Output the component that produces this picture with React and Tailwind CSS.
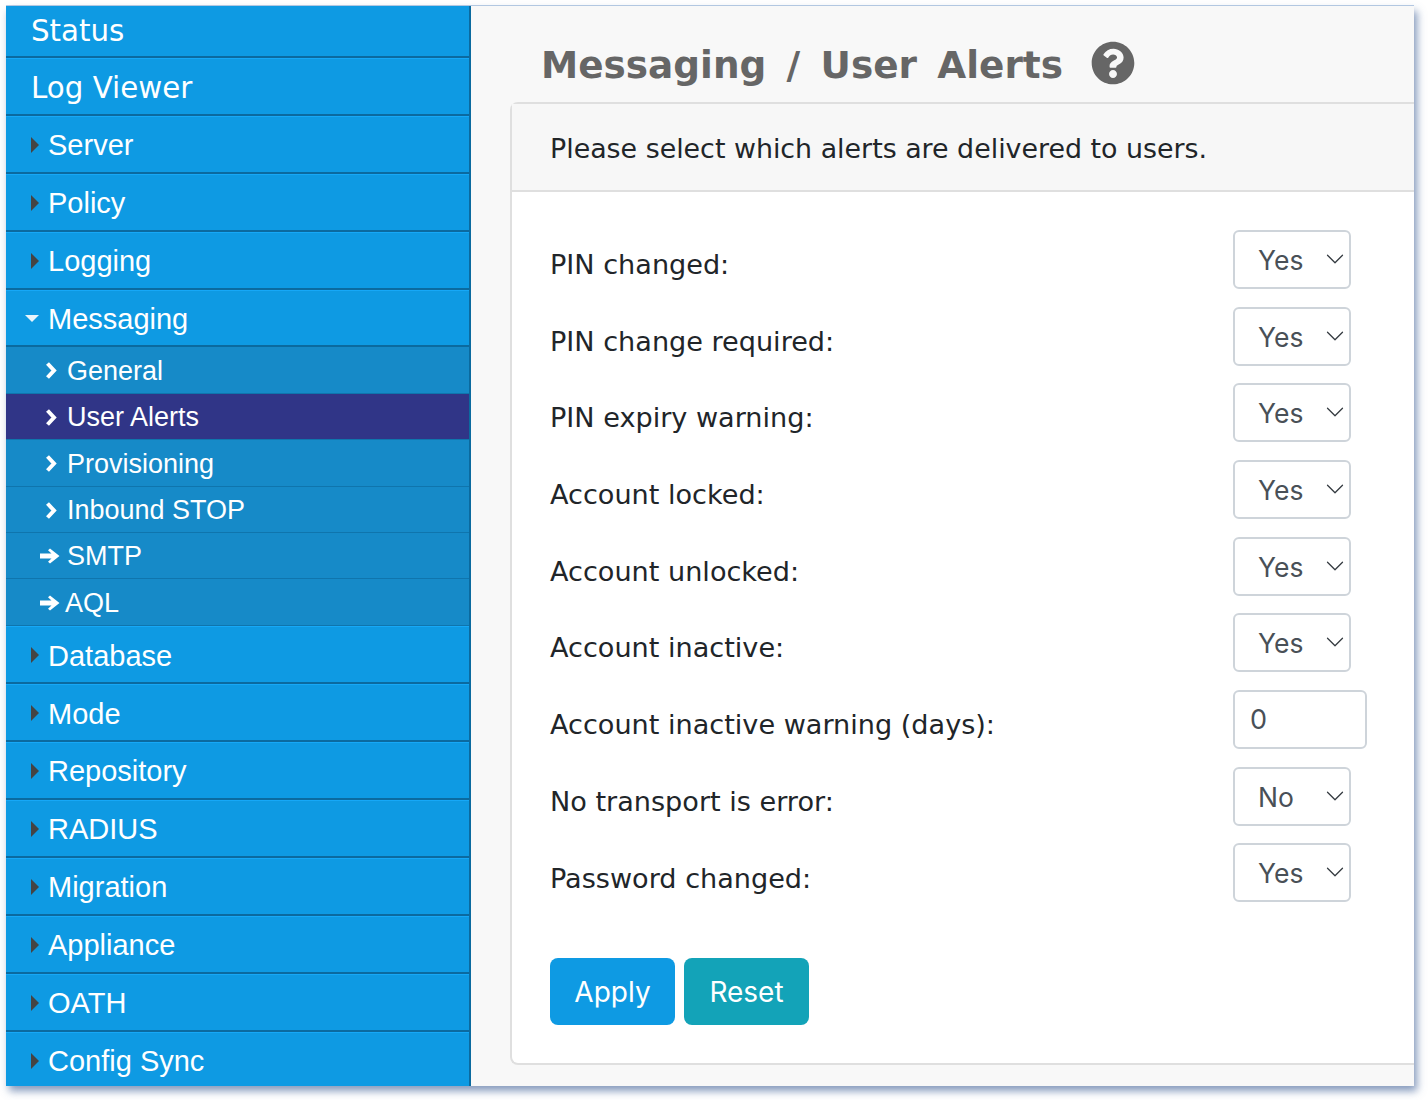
import React from 'react';
import { FaQuestionCircle } from 'react-icons/fa';
import { ChevronDown } from 'lucide-react';

const before = ['Server', 'Policy', 'Logging'];
const after = ['Database', 'Mode', 'Repository', 'RADIUS', 'Migration', 'Appliance', 'OATH'];
const subItems = [
  { name: 'General', icon: 'chevron', h: 'h-[47px]' },
  { name: 'User Alerts', icon: 'chevron', active: true, h: 'h-[46px]' },
  { name: 'Provisioning', icon: 'chevron', h: 'h-[47px]' },
  { name: 'Inbound STOP', icon: 'chevron', h: 'h-[46px]' },
  { name: 'SMTP', icon: 'arrow', h: 'h-[46px]' },
  { name: 'AQL', icon: 'arrow', h: 'h-[47px]' }
];
const alerts = [
  { label: 'PIN changed:', value: 'Yes' },
  { label: 'PIN change required:', value: 'Yes' },
  { label: 'PIN expiry warning:', value: 'Yes' },
  { label: 'Account locked:', value: 'Yes' },
  { label: 'Account unlocked:', value: 'Yes' },
  { label: 'Account inactive:', value: 'Yes' },
  { label: 'Account inactive warning (days):', value: '0', input: true },
  { label: 'No transport is error:', value: 'No' },
  { label: 'Password changed:', value: 'Yes' }
];

const NavRow = ({ children, plain, open, first, last }) => (
  <div
    className={`flex shrink-0 items-center border-b-[#0b6a9f] bg-[#0e9ae3] text-white ${
      first ? 'h-[52px] border-b-2 pt-[2px]' : last ? 'h-[58px] border-t border-t-[#16a8f7] pt-[1px]' : 'h-[57.9px] border-t border-b-2 border-t-[#16a8f7] pt-[3px]'
    }`}
  >
    {plain ? (
      <span className={`pl-[25px] font-['DejaVu_Sans',sans-serif] text-[29.3px] ${first ? '' : 'mt-[2px]'}`}>{children}</span>
    ) : (
      <>
        <span className="flex w-[42px] shrink-0 justify-end pr-[9px]">
          {open ? (
            <span className="mb-[2px] h-0 w-0 border-x-[7px] border-t-[7px] border-x-transparent border-t-[#e8f5fc]" />
          ) : (
            <span className="mb-[2px] h-0 w-0 border-y-[8px] border-l-[8px] border-y-transparent border-l-[#444]" />
          )}
        </span>
        <span className="font-['Liberation_Sans',sans-serif] text-[29px]">{children}</span>
      </>
    )}
  </div>
);

const SubRow = ({ item }) => (
  <div className={`flex ${item.h} shrink-0 items-center border-b border-b-[#0f75ad] pt-[1px] ${item.active ? 'bg-[#303587]' : 'bg-[#168ac8]'} text-white`}>
    {item.icon === 'chevron' ? (
      <svg className="ml-[39px] mr-[9px] h-[17px] w-[13px]" viewBox="0 0 13 17" fill="none" stroke="currentColor" strokeWidth="4">
        <path d="M2.5 1.5 9 8.5 2.5 15.5" />
      </svg>
    ) : (
      <svg className="ml-[34px] mr-[7px] h-[16px] w-[20px]" viewBox="0 0 20 16" fill="currentColor">
        <path d="M0 5.5h11.5L8 2.2 10 0.5 19.5 8 10 15.5 8 13.8 11.5 10.5H0z" />
      </svg>
    )}
    <span className={`font-['Liberation_Sans',sans-serif] text-[27px] ${item.name === 'AQL' ? '-ml-[2px]' : ''}`}>{item.name}</span>
  </div>
);

const Field = ({ item }) => (
  <div className="flex h-[76.7px] items-center justify-between">
    <span className="mt-[12px] font-['DejaVu_Sans',sans-serif] text-[27.1px] text-[#212529]">{item.label}</span>
    {item.input ? (
      <div className="mr-[47px] flex h-[59px] w-[134px] items-center rounded-[6px] border-2 border-[#ced4da] bg-white pl-[15px] pt-[2px] font-['Inter',sans-serif] text-[27px] text-[#495057]">
        {item.value}
      </div>
    ) : (
      <div className="relative mr-[63px] h-[59px] w-[118px]">
        <select
          defaultValue={item.value}
          className="h-full w-full appearance-none rounded-[6px] border-2 border-[#ced4da] bg-white pl-[23px] pt-[3px] font-['Inter',sans-serif] text-[26.5px] text-[#495057]"
        >
          <option>Yes</option>
          <option>No</option>
        </select>
        <ChevronDown className="absolute right-[1px] top-[14px] h-[30px] w-[30px] text-[#343a40]" strokeWidth={1} />
      </div>
    )}
  </div>
);

const App = () => {
  return (
    <div className="h-[1100px] w-[1428px] overflow-hidden bg-white pl-[6px] pt-[6px]">
      <div className="flex h-[1080px] w-[1408px] overflow-hidden bg-[#f8f8f8] shadow-[3px_5px_8px_rgba(80,110,160,0.7),0_-1px_0_#b9cde6]">
        <nav className="flex h-full w-[465px] shrink-0 flex-col overflow-hidden border-r-2 border-r-[#0b6a9f] bg-[#0e9ae3]">
          <NavRow plain first>Status</NavRow>
          <NavRow plain>Log Viewer</NavRow>
          {before.map((name) => (
            <NavRow key={name}>{name}</NavRow>
          ))}
          <NavRow open>Messaging</NavRow>
          {subItems.map((item) => (
            <SubRow key={item.name} item={item} />
          ))}
          {after.map((name) => (
            <NavRow key={name}>{name}</NavRow>
          ))}
          <NavRow last>Config Sync</NavRow>
        </nav>

        <main className="min-w-0 flex-1 pl-[39px]">
          <div className="flex h-[96px] items-center pl-[31px] pt-[22px]">
            <h1 className="whitespace-pre font-['DejaVu_Sans',sans-serif] text-[37.4px] font-bold text-[#666] [word-spacing:7.3px]">Messaging / User Alerts</h1>
            <FaQuestionCircle className="-mt-[4px] ml-[28px] h-[44px] w-[44px] text-[#666]" />
          </div>
          <section className="h-[963px] rounded-l-[8px] border-y-2 border-l-2 border-[#dfdfdf] bg-white">
            <div className="flex h-[88px] items-center border-b-2 border-[#dfdfdf] bg-[#f7f7f7] pl-[38px] pt-[5px] font-['DejaVu_Sans',sans-serif] text-[26.85px] text-[#212529]">
              Please select which alerts are delivered to users.
            </div>
            <div className="pl-[38px] pt-[29px]">
              {alerts.map((item) => (
                <Field key={item.label} item={item} />
              ))}
              <div className="mt-[47px] flex gap-[9px]">
                <button className="h-[67px] w-[125px] rounded-[8px] bg-[#0e9ae3] font-['Inter',sans-serif] text-[28px] text-white">Apply</button>
                <button className="h-[67px] w-[125px] rounded-[8px] bg-[#13a3b8] font-['Inter',sans-serif] text-[28px] text-white">Reset</button>
              </div>
            </div>
          </section>
        </main>
      </div>
    </div>
  );
};

export default App;
